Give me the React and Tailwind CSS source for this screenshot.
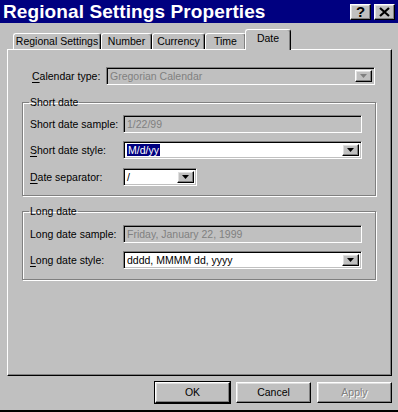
import React from "react";

// win95 bevels
const raised =
  "border border-t-white border-l-white border-r-black border-b-black shadow-[inset_-1px_-1px_0_#808080,inset_1px_1px_0_#dfdfdf]";
const sunken =
  "border border-t-[#808080] border-l-[#808080] border-b-white border-r-white shadow-[inset_1px_1px_0_#000,inset_-1px_-1px_0_#c0c0c0]";
const etched =
  "border border-[#808080] shadow-[inset_1px_1px_0_#fff,1px_1px_0_#fff]";

function Arrow({ disabled }) {
  return (
    <div className={`w-[17px] h-full bg-[#c0c0c0] flex items-center justify-center ${raised}`}>
      <svg width="7" height="4" viewBox="0 0 7 4">
        <path d="M0 0h7L3.5 4z" fill={disabled ? "#808080" : "#000"} />
      </svg>
    </div>
  );
}

function Combo({ width, value, selected, disabled }) {
  return (
    <div
      className={`h-[18px] flex items-stretch p-[2px] ${sunken} ${disabled ? "bg-[#c0c0c0]" : "bg-white"}`}
      style={{ width }}
    >
      <div className="flex-1 flex items-center pl-[1px] overflow-hidden whitespace-nowrap">
        {selected ? (
          <span className="bg-[#000080] text-white px-[1px] leading-[13px]">{value}</span>
        ) : (
          <span className={disabled ? "text-[#808080]" : ""}>{value}</span>
        )}
      </div>
      <Arrow disabled={disabled} />
    </div>
  );
}

function Field({ width, value }) {
  return (
    <div
      className={`h-[18px] flex items-center pl-[3px] bg-[#c0c0c0] text-[#808080] whitespace-nowrap ${sunken}`}
      style={{ width }}
    >
      {value}
    </div>
  );
}

function Row({ label, children, className = "" }) {
  return (
    <div className={`flex items-center ${className}`}>
      <div className="w-[93px] whitespace-nowrap">{label}</div>
      {children}
    </div>
  );
}

function Tab({ label, active, width }) {
  if (active) {
    return (
      <div
        className="relative z-10 -mb-[1px] -mx-[1px] shrink-0 whitespace-nowrap h-[21px] bg-[#c0c0c0] rounded-t-[3px] border-t border-l border-t-white border-l-white border-r border-r-black shadow-[inset_-1px_0_0_#808080] flex items-start justify-center pt-[2px]"
        style={{ width }}
      >
        {label}
      </div>
    );
  }
  return (
    <div
      className="h-[16px] shrink-0 whitespace-nowrap bg-[#c0c0c0] rounded-t-[3px] border-t border-l border-t-white border-l-white border-r border-r-black shadow-[inset_-1px_0_0_#808080] flex items-center justify-center"
      style={{ width }}
    >
      {label}
    </div>
  );
}

function Btn({ children, isDefault, disabled }) {
  return (
    <div
      className={`w-[75px] h-[21px] flex items-center justify-center ${
        isDefault ? "outline outline-1 outline-black" : ""
      } ${raised} ${disabled ? "text-[#808080] [text-shadow:1px_1px_0_#fff]" : ""}`}
    >
      {children}
    </div>
  );
}

export default function App() {
  return (
    <div className="w-[398px] h-[412px] bg-[#c0c0c0] font-['Liberation_Sans',Arial,sans-serif] text-[10.5px] leading-[13px] text-black flex flex-col overflow-hidden border-b-2 border-b-black">
      {/* title bar */}
      <div className="h-[23px] bg-[#000080] flex items-center justify-between pl-[3px] pr-[3px]">
        <span className="text-white font-bold text-[19px] leading-[23px] tracking-[0.1px]">
          Regional Settings Properties
        </span>
        <div className="flex gap-[3px]">
          <div className={`w-[21px] h-[16px] bg-[#c0c0c0] flex items-center justify-center font-bold text-[15px] leading-none ${raised}`}>
            ?
          </div>
          <div className={`w-[21px] h-[16px] bg-[#c0c0c0] flex items-center justify-center ${raised}`}>
            <svg width="11" height="10" viewBox="0 0 11 10">
              <path d="M1 1l9 8M10 1l-9 8" stroke="#000" strokeWidth="2.2" />
            </svg>
          </div>
        </div>
      </div>

      {/* tabs */}
      <div className="mt-[6px] h-[20px] flex items-end pl-[13px]">
        <Tab label="Regional Settings" width={88} />
        <Tab label="Number" width={51} />
        <Tab label="Currency" width={53} />
        <Tab label="Time" width={41} />
        <Tab label="Date" width={46} active />
      </div>

      {/* panel */}
      <div className="ml-[7px] w-[385px] h-[327px] border border-t-white border-l-white border-r-black border-b-black shadow-[inset_-1px_-1px_0_#808080] flex flex-col pl-[14px]">
        <div className="mt-[17px] pl-[10px] flex items-center">
          <div className="w-[74px] whitespace-nowrap">
            <u className="underline-offset-2">C</u>alendar type:
          </div>
          <Combo width={269} value="Gregorian Calendar" disabled />
        </div>

        <fieldset className={`mt-[11px] w-[354px] pl-[7px] pb-[9px] ${etched}`}>
          <legend className="-ml-[1px] px-[1px] leading-[13px]">Short date</legend>
          <Row label="Short date sample:" className="mt-[6px]">
            <Field width={239} value="1/22/99" />
          </Row>
          <Row
            label={
              <>
                <u className="underline-offset-2">S</u>hort date style:
              </>
            }
            className="mt-[8px]"
          >
            <Combo width={239} value="M/d/yy" selected />
          </Row>
          <Row
            label={
              <>
                <u className="underline-offset-2">D</u>ate separator:
              </>
            }
            className="mt-[9px]"
          >
            <Combo width={74} value="/" />
          </Row>
        </fieldset>

        <fieldset className={`mt-[9px] w-[354px] pl-[7px] pb-[10px] ${etched}`}>
          <legend className="-ml-[1px] px-[1px] leading-[13px]">Long date</legend>
          <Row label="Long date sample:" className="mt-[7px]">
            <Field width={239} value="Friday, January 22, 1999" />
          </Row>
          <Row
            label={
              <>
                <u className="underline-offset-2">L</u>ong date style:
              </>
            }
            className="mt-[8px]"
          >
            <Combo width={239} value="dddd, MMMM dd, yyyy" />
          </Row>
        </fieldset>
      </div>

      {/* buttons */}
      <div className="mt-[6px] flex justify-end gap-[6px] pr-[6px]">
        <Btn isDefault>OK</Btn>
        <Btn>Cancel</Btn>
        <Btn disabled>Apply</Btn>
      </div>
    </div>
  );
}
